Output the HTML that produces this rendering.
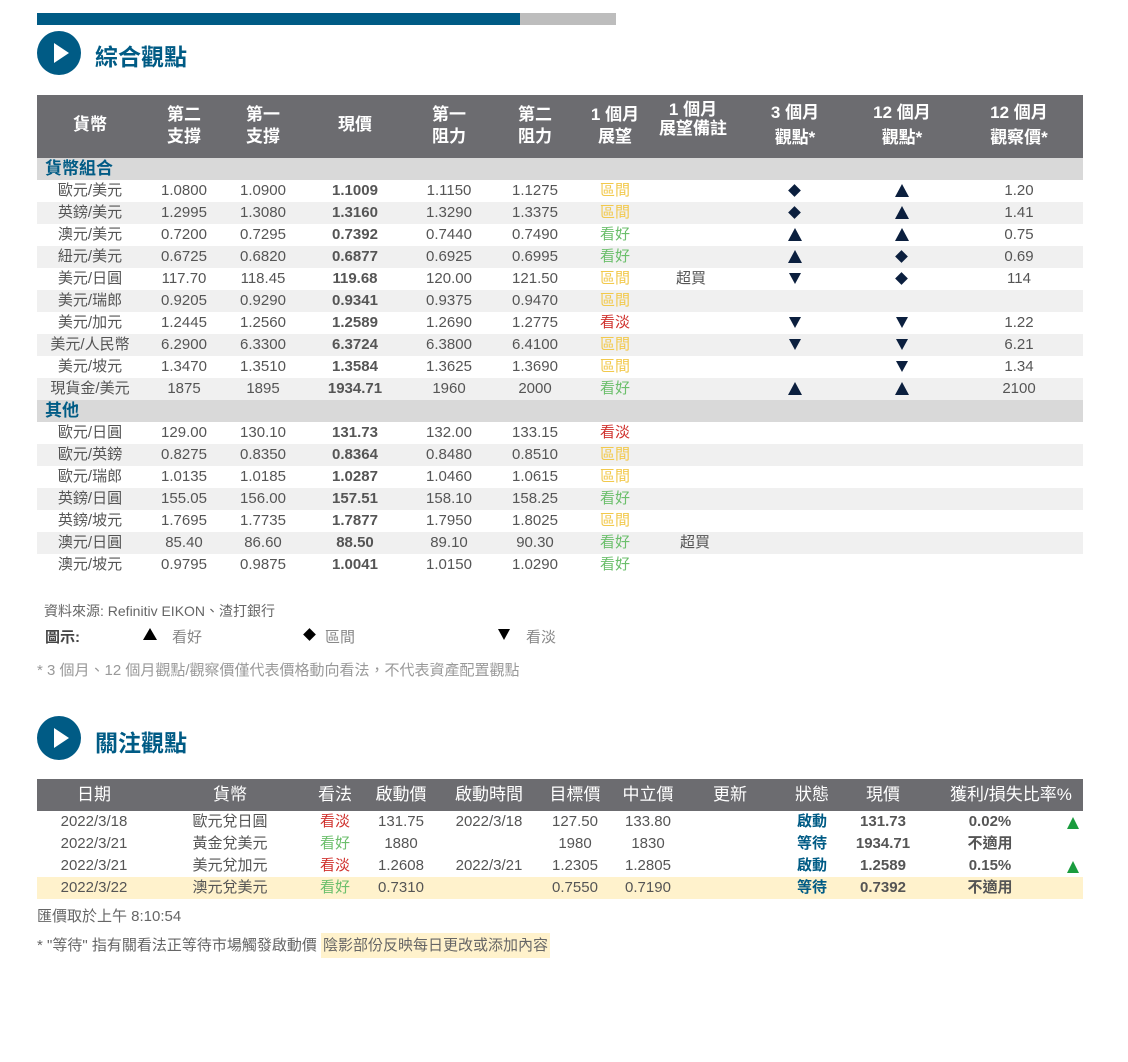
<!DOCTYPE html>
<html><head><meta charset="utf-8"><style>
body{margin:0;width:1128px;height:1062px;background:#fff;font-family:"Liberation Sans","Noto Sans CJK TC",sans-serif;position:relative;overflow:hidden;color:#555}
.a{position:absolute}
.c{position:absolute;width:120px;margin-left:-60px;text-align:center;white-space:nowrap}
.row{position:absolute;left:37px;width:1046px;height:22px;line-height:22px;font-size:15px}
.row .c{top:0}
.sh{background:#f0f0f0}
.b{font-weight:bold;color:#555}
.y{color:#f2c94c}.g{color:#6cbf6c}.r{color:#d0312d}
.up,.dn,.dm{position:absolute;width:0;height:0}
.up{margin-left:-7px;top:4px;border-left:7px solid transparent;border-right:7px solid transparent;border-bottom:13px solid #0b1f3e}
.dn{margin-left:-6px;top:5px;border-left:6px solid transparent;border-right:6px solid transparent;border-top:11px solid #0b1f3e}
.dm{margin-left:-5px;top:6px;width:9px;height:9px;background:#0b1f3e;transform:rotate(45deg)}
.hd{position:absolute;left:37px;width:1046px;background:#6c6c70;color:#fff;font-weight:bold}
.circ{position:absolute;width:44px;height:44px;border-radius:50%;background:#005b85}
.circ:after{content:"";position:absolute;left:17px;top:12px;border-left:15px solid #fff;border-top:10px solid transparent;border-bottom:10px solid transparent}
.ttl{position:absolute;font-size:23px;font-weight:bold;color:#005b85}
.sec{position:absolute;left:37px;width:1046px;height:22px;background:#d9d9d9;color:#005b85;font-weight:bold;font-size:17px;line-height:22px;padding-left:8px;box-sizing:border-box}
.r2{position:absolute;left:37px;width:1046px;height:22px;line-height:22px;font-size:15px}
.st{color:#005b85;font-weight:bold}
.gt{position:absolute;margin-left:-6px;top:6px;width:0;height:0;border-left:6px solid transparent;border-right:6px solid transparent;border-bottom:12px solid #1a9c3e}
</style></head><body>
<div class="a" style="left:37px;top:13px;width:483px;height:12px;background:#005b85"></div>
<div class="a" style="left:520px;top:13px;width:96px;height:12px;background:#bdbdbd"></div>
<div class="circ" style="left:37px;top:31px"></div>
<div class="ttl" style="left:95px;top:38px">綜合觀點</div>

<div class="hd" style="top:95px;height:63px;font-size:17px;line-height:22px">
<div class="c" style="left:53px;top:19px">貨幣</div>
<div class="c" style="left:147px;top:9px">第二<br>支撐</div>
<div class="c" style="left:226px;top:9px">第一<br>支撐</div>
<div class="c" style="left:318px;top:19px">現價</div>
<div class="c" style="left:412px;top:9px">第一<br>阻力</div>
<div class="c" style="left:498px;top:9px">第二<br>阻力</div>
<div class="c" style="left:578px;top:9px">1 個月<br>展望</div>
<div class="c" style="left:656px;top:5px;line-height:19px">1 個月<br>展望備註</div>
<div class="c" style="left:758px;top:5px;line-height:25px">3 個月<br>觀點*</div>
<div class="c" style="left:865px;top:5px;line-height:25px">12 個月<br>觀點*</div>
<div class="c" style="left:982px;top:5px;line-height:25px">12 個月<br>觀察價*</div>
</div>
<div class="sec" style="top:158px">貨幣組合</div>

<div class="row" style="top:180px"><span class="c" style="left:53px">歐元/美元</span><span class="c" style="left:147px">1.0800</span><span class="c" style="left:226px">1.0900</span><span class="c b" style="left:318px">1.1009</span><span class="c" style="left:412px">1.1150</span><span class="c" style="left:498px">1.1275</span><span class="c y" style="left:578px">區間</span><span class="dm" style="left:758px"></span><span class="up" style="left:865px"></span><span class="c" style="left:982px">1.20</span></div>
<div class="row sh" style="top:202px"><span class="c" style="left:53px">英鎊/美元</span><span class="c" style="left:147px">1.2995</span><span class="c" style="left:226px">1.3080</span><span class="c b" style="left:318px">1.3160</span><span class="c" style="left:412px">1.3290</span><span class="c" style="left:498px">1.3375</span><span class="c y" style="left:578px">區間</span><span class="dm" style="left:758px"></span><span class="up" style="left:865px"></span><span class="c" style="left:982px">1.41</span></div>
<div class="row" style="top:224px"><span class="c" style="left:53px">澳元/美元</span><span class="c" style="left:147px">0.7200</span><span class="c" style="left:226px">0.7295</span><span class="c b" style="left:318px">0.7392</span><span class="c" style="left:412px">0.7440</span><span class="c" style="left:498px">0.7490</span><span class="c g" style="left:578px">看好</span><span class="up" style="left:758px"></span><span class="up" style="left:865px"></span><span class="c" style="left:982px">0.75</span></div>
<div class="row sh" style="top:246px"><span class="c" style="left:53px">紐元/美元</span><span class="c" style="left:147px">0.6725</span><span class="c" style="left:226px">0.6820</span><span class="c b" style="left:318px">0.6877</span><span class="c" style="left:412px">0.6925</span><span class="c" style="left:498px">0.6995</span><span class="c g" style="left:578px">看好</span><span class="up" style="left:758px"></span><span class="dm" style="left:865px"></span><span class="c" style="left:982px">0.69</span></div>
<div class="row" style="top:268px"><span class="c" style="left:53px">美元/日圓</span><span class="c" style="left:147px">117.70</span><span class="c" style="left:226px">118.45</span><span class="c b" style="left:318px">119.68</span><span class="c" style="left:412px">120.00</span><span class="c" style="left:498px">121.50</span><span class="c y" style="left:578px">區間</span><span class="c" style="left:654px">超買</span><span class="dn" style="left:758px"></span><span class="dm" style="left:865px"></span><span class="c" style="left:982px">114</span></div>
<div class="row sh" style="top:290px"><span class="c" style="left:53px">美元/瑞郎</span><span class="c" style="left:147px">0.9205</span><span class="c" style="left:226px">0.9290</span><span class="c b" style="left:318px">0.9341</span><span class="c" style="left:412px">0.9375</span><span class="c" style="left:498px">0.9470</span><span class="c y" style="left:578px">區間</span></div>
<div class="row" style="top:312px"><span class="c" style="left:53px">美元/加元</span><span class="c" style="left:147px">1.2445</span><span class="c" style="left:226px">1.2560</span><span class="c b" style="left:318px">1.2589</span><span class="c" style="left:412px">1.2690</span><span class="c" style="left:498px">1.2775</span><span class="c r" style="left:578px">看淡</span><span class="dn" style="left:758px"></span><span class="dn" style="left:865px"></span><span class="c" style="left:982px">1.22</span></div>
<div class="row sh" style="top:334px"><span class="c" style="left:53px">美元/人民幣</span><span class="c" style="left:147px">6.2900</span><span class="c" style="left:226px">6.3300</span><span class="c b" style="left:318px">6.3724</span><span class="c" style="left:412px">6.3800</span><span class="c" style="left:498px">6.4100</span><span class="c y" style="left:578px">區間</span><span class="dn" style="left:758px"></span><span class="dn" style="left:865px"></span><span class="c" style="left:982px">6.21</span></div>
<div class="row" style="top:356px"><span class="c" style="left:53px">美元/坡元</span><span class="c" style="left:147px">1.3470</span><span class="c" style="left:226px">1.3510</span><span class="c b" style="left:318px">1.3584</span><span class="c" style="left:412px">1.3625</span><span class="c" style="left:498px">1.3690</span><span class="c y" style="left:578px">區間</span><span class="dn" style="left:865px"></span><span class="c" style="left:982px">1.34</span></div>
<div class="row sh" style="top:378px"><span class="c" style="left:53px">現貨金/美元</span><span class="c" style="left:147px">1875</span><span class="c" style="left:226px">1895</span><span class="c b" style="left:318px">1934.71</span><span class="c" style="left:412px">1960</span><span class="c" style="left:498px">2000</span><span class="c g" style="left:578px">看好</span><span class="up" style="left:758px"></span><span class="up" style="left:865px"></span><span class="c" style="left:982px">2100</span></div>
<div class="sec" style="top:400px">其他</div>
<div class="row" style="top:422px"><span class="c" style="left:53px">歐元/日圓</span><span class="c" style="left:147px">129.00</span><span class="c" style="left:226px">130.10</span><span class="c b" style="left:318px">131.73</span><span class="c" style="left:412px">132.00</span><span class="c" style="left:498px">133.15</span><span class="c r" style="left:578px">看淡</span></div>
<div class="row sh" style="top:444px"><span class="c" style="left:53px">歐元/英鎊</span><span class="c" style="left:147px">0.8275</span><span class="c" style="left:226px">0.8350</span><span class="c b" style="left:318px">0.8364</span><span class="c" style="left:412px">0.8480</span><span class="c" style="left:498px">0.8510</span><span class="c y" style="left:578px">區間</span></div>
<div class="row" style="top:466px"><span class="c" style="left:53px">歐元/瑞郎</span><span class="c" style="left:147px">1.0135</span><span class="c" style="left:226px">1.0185</span><span class="c b" style="left:318px">1.0287</span><span class="c" style="left:412px">1.0460</span><span class="c" style="left:498px">1.0615</span><span class="c y" style="left:578px">區間</span></div>
<div class="row sh" style="top:488px"><span class="c" style="left:53px">英鎊/日圓</span><span class="c" style="left:147px">155.05</span><span class="c" style="left:226px">156.00</span><span class="c b" style="left:318px">157.51</span><span class="c" style="left:412px">158.10</span><span class="c" style="left:498px">158.25</span><span class="c g" style="left:578px">看好</span></div>
<div class="row" style="top:510px"><span class="c" style="left:53px">英鎊/坡元</span><span class="c" style="left:147px">1.7695</span><span class="c" style="left:226px">1.7735</span><span class="c b" style="left:318px">1.7877</span><span class="c" style="left:412px">1.7950</span><span class="c" style="left:498px">1.8025</span><span class="c y" style="left:578px">區間</span></div>
<div class="row sh" style="top:532px"><span class="c" style="left:53px">澳元/日圓</span><span class="c" style="left:147px">85.40</span><span class="c" style="left:226px">86.60</span><span class="c b" style="left:318px">88.50</span><span class="c" style="left:412px">89.10</span><span class="c" style="left:498px">90.30</span><span class="c g" style="left:578px">看好</span><span class="c" style="left:658px">超買</span></div>
<div class="row" style="top:554px"><span class="c" style="left:53px">澳元/坡元</span><span class="c" style="left:147px">0.9795</span><span class="c" style="left:226px">0.9875</span><span class="c b" style="left:318px">1.0041</span><span class="c" style="left:412px">1.0150</span><span class="c" style="left:498px">1.0290</span><span class="c g" style="left:578px">看好</span></div>

<div class="a" style="left:44px;top:601px;font-size:14px;color:#666">資料來源: Refinitiv EIKON、渣打銀行</div>
<div class="a" style="left:45px;top:626px;font-size:15px;color:#444;font-weight:bold">圖示:</div>
<div class="a" style="left:143px;top:628px;width:0;height:0;border-left:7px solid transparent;border-right:7px solid transparent;border-bottom:12px solid #000"></div>
<div class="a" style="left:172px;top:626px;font-size:15px;color:#888">看好</div>
<div class="a" style="left:305px;top:630px;width:9px;height:9px;background:#000;transform:rotate(45deg)"></div>
<div class="a" style="left:325px;top:626px;font-size:15px;color:#888">區間</div>
<div class="a" style="left:498px;top:629px;width:0;height:0;border-left:6px solid transparent;border-right:6px solid transparent;border-top:11px solid #000"></div>
<div class="a" style="left:526px;top:626px;font-size:15px;color:#888">看淡</div>
<div class="a" style="left:37px;top:659px;font-size:15px;color:#999">* 3 個月、12 個月觀點/觀察價僅代表價格動向看法，不代表資產配置觀點</div>

<div class="circ" style="left:37px;top:716px"></div>
<div class="ttl" style="left:95px;top:724px">關注觀點</div>

<div class="hd" style="top:779px;height:32px;line-height:32px;font-size:17px;font-weight:normal">
<span class="c" style="left:57px">日期</span><span class="c" style="left:193px">貨幣</span><span class="c" style="left:298px">看法</span><span class="c" style="left:364px">啟動價</span><span class="c" style="left:452px">啟動時間</span><span class="c" style="left:538px">目標價</span><span class="c" style="left:611px">中立價</span><span class="c" style="left:693px">更新</span><span class="c" style="left:775px">狀態</span><span class="c" style="left:846px">現價</span><span class="c" style="left:973px">獲利/損失比率%</span>
</div>
<div class="r2" style="top:811px"><span class="c" style="left:57px">2022/3/18</span><span class="c" style="left:193px">歐元兌日圓</span><span class="c r" style="left:298px">看淡</span><span class="c" style="left:364px">131.75</span><span class="c" style="left:452px">2022/3/18</span><span class="c" style="left:538px">127.50</span><span class="c" style="left:611px">133.80</span><span class="c st" style="left:775px">啟動</span><span class="c b" style="left:846px">131.73</span><span class="c b" style="left:953px">0.02%</span><span class="gt" style="left:1036px"></span></div>
<div class="r2" style="top:833px"><span class="c" style="left:57px">2022/3/21</span><span class="c" style="left:193px">黃金兌美元</span><span class="c g" style="left:298px">看好</span><span class="c" style="left:364px">1880</span><span class="c" style="left:538px">1980</span><span class="c" style="left:611px">1830</span><span class="c st" style="left:775px">等待</span><span class="c b" style="left:846px">1934.71</span><span class="c b" style="left:953px">不適用</span></div>
<div class="r2" style="top:855px"><span class="c" style="left:57px">2022/3/21</span><span class="c" style="left:193px">美元兌加元</span><span class="c r" style="left:298px">看淡</span><span class="c" style="left:364px">1.2608</span><span class="c" style="left:452px">2022/3/21</span><span class="c" style="left:538px">1.2305</span><span class="c" style="left:611px">1.2805</span><span class="c st" style="left:775px">啟動</span><span class="c b" style="left:846px">1.2589</span><span class="c b" style="left:953px">0.15%</span><span class="gt" style="left:1036px"></span></div>
<div class="r2" style="top:877px;background:#fff2cc"><span class="c" style="left:57px">2022/3/22</span><span class="c" style="left:193px">澳元兌美元</span><span class="c g" style="left:298px">看好</span><span class="c" style="left:364px">0.7310</span><span class="c" style="left:538px">0.7550</span><span class="c" style="left:611px">0.7190</span><span class="c st" style="left:775px">等待</span><span class="c b" style="left:846px">0.7392</span><span class="c b" style="left:953px">不適用</span></div>
<div class="a" style="left:37px;top:905px;font-size:15px;color:#666">匯價取於上午 8:10:54</div>
<div class="a" style="left:37px;top:934px;font-size:15px;color:#666">* "等待" 指有關看法正等待市場觸發啟動價 <span style="background:#fff2cc;padding:4px 2px">陰影部份反映每日更改或添加內容</span></div>
</body></html>
